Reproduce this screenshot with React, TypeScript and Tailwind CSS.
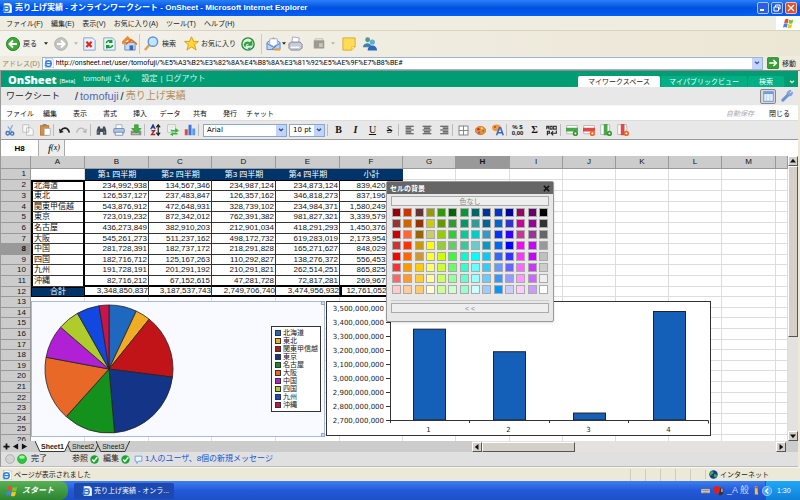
import { useState } from 'react';
import type { ReactNode } from 'react';
import clsx from 'clsx';

const browserMenu = ['ファイル(F)', '編集(E)', '表示(V)', 'お気に入り(A)', 'ツール(T)', 'ヘルプ(H)'];
const sheetMenu = ['ファイル', '編集', '表示', '書式', '挿入', 'データ', '共有', '発行', 'チャット'];

const columns = [
  { id: 'A', width: 'w-[54px]' },
  { id: 'B', width: 'w-[64px]' },
  { id: 'C', width: 'w-[63px]' },
  { id: 'D', width: 'w-[64px]' },
  { id: 'E', width: 'w-[64px]' },
  { id: 'F', width: 'w-[63px]' },
  { id: 'G', width: 'w-[53px]' },
  { id: 'H', width: 'w-[54px]' },
  { id: 'I', width: 'w-[53px]' },
  { id: 'J', width: 'w-[53px]' },
  { id: 'K', width: 'w-[53px]' },
  { id: 'L', width: 'w-[53px]' },
  { id: 'M', width: 'w-[54px]' },
  { id: '', width: '' },
];

const quarters = ['第1 四半期', '第2 四半期', '第3 四半期', '第4 四半期', '小計'];

const regions = [
  { name: '北海道', color: '#1f68c0', sales: ['234,992,938', '134,567,346', '234,987,124', '234,873,124', '839,420,532'] },
  { name: '東北', color: '#f0ac24', sales: ['126,537,127', '237,483,847', '126,357,162', '346,818,273', '837,196,409'] },
  { name: '関東甲信越', color: '#c01418', sales: ['543,876,912', '472,648,931', '328,739,102', '234,984,371', '1,580,249,316'] },
  { name: '東京', color: '#143488', sales: ['723,019,232', '872,342,012', '762,391,382', '981,827,321', '3,339,579,947'] },
  { name: '名古屋', color: '#14901c', sales: ['436,273,849', '382,910,203', '212,901,034', '418,291,293', '1,450,376,379'] },
  { name: '大阪', color: '#e86828', sales: ['545,261,273', '511,237,162', '498,172,732', '619,283,019', '2,173,954,186'] },
  { name: '中国', color: '#b020d4', sales: ['281,728,391', '182,737,172', '218,291,828', '165,271,627', '848,029,018'] },
  { name: '四国', color: '#b0cc2c', sales: ['182,716,712', '125,167,263', '110,292,827', '138,276,372', '556,453,174'] },
  { name: '九州', color: '#1048e0', sales: ['191,728,191', '201,291,192', '210,291,821', '262,514,251', '865,825,455'] },
  { name: '沖縄', color: '#c81448', sales: ['82,716,212', '67,152,615', '47,281,728', '72,817,281', '269,967,836'] },
];

const totals = ['3,348,850,837', '3,187,537,743', '2,749,706,740', '3,474,956,932', '12,761,052,252'];

const swatches = [
  '990000 cc3300 663333 999900 339900 006600 009933 006666 003399 0033cc 000099 990066 660066 000000',
  '993333 cc6600 993300 cccc00 669900 339933 009966 339999 006699 0066cc 3333cc cc0099 990099 333333',
  'cc0000 ff6633 996600 cccc66 99cc00 33cc33 00cc99 00cccc 3399cc 0033ff 3300ff cc3399 993399 666666',
  'cc3333 ff3300 cc9900 ffff00 99cc33 66cc66 33cc99 66cccc 0099cc 0066ff 0000ff ff00ff cc00ff 999999',
  'ff0000 ff6600 cc9933 ffff33 ccff00 33ff33 00ffcc 00ffff 00ccff 3366ff 3333ff ff33ff cc00ff c0c0c0',
  'ff3333 ff9900 ffcc00 ffff66 ccff33 66ff66 33ffcc 66ffff 33ccff 6699ff 6666ff ff66ff cc33ff cccccc',
  'ff6666 ff9933 ffcc33 ffff99 ccff66 99ff99 66ffcc 99ffff 66ccff 3399ff 9999ff ff99ff cc66ff eeeeee',
  'ffcccc ffcc99 ffcc66 ffffcc ccff99 ccffcc 99ffcc ccffff 99ccff 0099ff ccccff ffccff cc99ff ffffff',
].flatMap((line) => line.split(' '));

const toNumber = (value: string) => Number(value.replace(/,/g, ''));

function Icon({ size = 'size-[14px]', children }: { size?: string; children: ReactNode }) {
  return (
    <svg viewBox="0 0 16 16" className={clsx(size, 'shrink-0')} fill="none" aria-hidden="true">
      {children}
    </svg>
  );
}

function IePage({ size = 'size-[11px]' }: { size?: string }) {
  return (
    <Icon size={size}>
      <path d="M3 0h9l4 4v12H3z" fill="#fff" stroke="#7a96c8" />
      <circle cx="7" cy="9" r="4.6" stroke="#2a78d8" strokeWidth="2.2" />
      <path d="M3 9h8" stroke="#2a78d8" strokeWidth="2" />
      <path d="M1 13C4 5 10 3 13 5" stroke="#6aa8f0" strokeWidth="1.2" />
    </Icon>
  );
}

function WindowsFlag({ size = 'size-[12px]' }: { size?: string }) {
  return (
    <Icon size={size}>
      <path d="M3 2c2-1.300 4-1 5 0L7 7.500C5.500 6.500 3.500 6.500 1.500 7.500z" fill="#e8502c" />
      <path d="M9 2.500c2 1 4 1 6-.2L13.700 7.700c-2 1.200-4 1-5.700.1z" fill="#7cc42c" />
      <path d="M1.300 8.500c2-1 4-1 5.500 0L5.500 14C4 13 2 13 0 14z" fill="#3c84f0" />
      <path d="M7.800 8.800c2 1 4 1 5.700 0L12 14.300c-2 1-4 1-5.500 0z" fill="#f8c420" />
    </Icon>
  );
}

function Caret({ dim = false }: { dim?: boolean }) {
  return (
    <svg viewBox="0 0 6 4" className="h-[3px] w-[4px] shrink-0" aria-hidden="true">
      <path d="M0 0h6L3 4z" fill={dim ? '#b8b4a8' : '#222'} />
    </svg>
  );
}

function TitleBar() {
  return (
    <header className="flex h-4 shrink-0 items-center gap-[3px] bg-linear-to-b from-[#2a80f8] via-[#0050e0] to-[#0060f8] pl-0.5 pr-[3px]">
      <IePage size="size-[10px]" />
      <h1 className="flex-1 text-[8px] leading-none font-bold text-white">
        売り上げ実績 - オンラインワークシート - OnSheet - Microsoft Internet Explorer
      </h1>
      <div className="flex gap-[2px]">
        <button aria-label="最小化" className="flex size-3 items-end justify-start rounded-[2px] border border-[#a8c4f8] bg-[#2a60e0] p-[2px]">
          <span className="h-[2px] w-1 bg-white" />
        </button>
        <button aria-label="元に戻す" className="flex size-3 items-center justify-center rounded-[2px] border border-[#a8c4f8] bg-[#2a60e0]">
          <Icon size="size-[8px]">
            <path d="M5 6V2h9v8h-3M2 6h9v8H2z" stroke="#fff" strokeWidth="2" />
          </Icon>
        </button>
        <button aria-label="閉じる" className="flex size-3 items-center justify-center rounded-[2px] border border-[#f0c0b0] bg-[#e0502c]">
          <Icon size="size-[8px]">
            <path d="M2 2l12 12M14 2L2 14" stroke="#fff" strokeWidth="2.600" />
          </Icon>
        </button>
      </div>
    </header>
  );
}

function BrowserMenu() {
  return (
    <nav className="flex h-[15px] shrink-0 items-center border-b border-[#d8d4c4] bg-[#efede2]">
      <div className="flex flex-1 gap-2 pl-1.5">
        {browserMenu.map((item) => (
          <button key={item} className="text-[7px] leading-none text-[#222]">{item}</button>
        ))}
      </div>
      <div className="flex h-full w-6 items-center justify-center bg-white">
        <WindowsFlag size="size-[11px]" />
      </div>
    </nav>
  );
}

function Divider() {
  return <span className="h-5 w-px shrink-0 bg-[#cfcbbb]" />;
}

function BrowserToolbar() {
  return (
    <div className="flex h-[25px] shrink-0 items-center bg-linear-to-r from-[#f3f2ec] to-[#ece6d4] pl-1.5 text-[7px] leading-none whitespace-nowrap text-[#222]">
      <button className="flex w-12 items-center gap-[3px]">
        <Icon>
          <circle cx="8" cy="8" r="7.500" fill="#3cac34" stroke="#1c7c20" />
          <path d="M12.500 8H5M8 4L4 8l4 4" stroke="#fff" strokeWidth="2.200" />
        </Icon>
        戻る
        <span className="pl-1"><Caret /></span>
      </button>
      <button aria-label="進む" className="flex w-[25px] items-center gap-1.5">
        <Icon>
          <circle cx="8" cy="8" r="7.200" fill="#c4c4c2" stroke="#a8a8a8" />
          <path d="M3.500 8H11M8 4l4 4-4 4" stroke="#fff" strokeWidth="2.200" />
        </Icon>
        <Caret dim />
      </button>
      <button aria-label="中止" className="flex w-5 justify-center">
        <Icon>
          <path d="M2 1h10l3 3v11H2z" fill="#e8f2ff" stroke="#7c98d0" />
          <path d="M5 5.500l6 6M11 5.500l-6 6" stroke="#e02818" strokeWidth="2.600" />
        </Icon>
      </button>
      <button aria-label="更新" className="flex w-5 justify-center">
        <Icon>
          <path d="M2 1h10l3 3v11H2z" fill="#e8f8f0" stroke="#7c98d0" />
          <path d="M5 7c0-3 4-4 6-1.500M11 3v3H8M12 9c0 3-4 4-6 1.500M5.500 13v-3h3" stroke="#18983c" strokeWidth="1.800" />
        </Icon>
      </button>
      <button aria-label="ホーム" className="flex w-5 justify-center">
        <Icon size="size-[15px]">
          <path d="M3 7h11v8H3z" fill="#c8dcf8" stroke="#6c8cc8" />
          <path d="M0 8l6-6 4 4" stroke="#f08828" strokeWidth="3" />
          <path d="M4 9l6-5 6 5" stroke="#e07020" strokeWidth="1.800" />
          <path d="M8 10h4v5H8z" fill="#3468c0" />
        </Icon>
      </button>
      <Divider />
      <button className="ml-1 flex w-10 items-center gap-[3px]">
        <Icon size="size-[15px]">
          <path d="M1 15l5-6" stroke="#e09c50" strokeWidth="2.600" />
          <circle cx="9.500" cy="6" r="5" fill="#c4e4fc" stroke="#5c94d8" strokeWidth="1.500" />
        </Icon>
        検索
      </button>
      <button className="flex w-[57px] items-center gap-[2px]">
        <Icon size="size-[15px]">
          <path d="M8 .8l2.200 5h5.300l-4.200 3.500 1.600 5.700L8 11.600 3.100 15l1.600-5.700L.5 5.800h5.300z" fill="#ffd838" stroke="#e09818" />
        </Icon>
        お気に入り
      </button>
      <button aria-label="履歴" className="flex w-5 items-center">
        <Icon>
          <circle cx="8" cy="8" r="7" fill="#dcf4dc" stroke="#288c38" strokeWidth="1.600" />
          <path d="M3 9c1-4 5-5 7-3l3-3v7H6l3-2C7 7 5.500 8 5 12z" fill="#30a044" />
          <path d="M8 13.500l3-1" stroke="#3c84d0" strokeWidth="1.500" />
        </Icon>
      </button>
      <Divider />
      <button aria-label="メール" className="flex w-[24px] items-center gap-px pl-1">
        <Icon size="size-[15px]">
          <path d="M1 7l7-5 7 5v7.500H1z" fill="#b8d4fc" stroke="#5c84cc" />
          <path d="M4 3h8v6l-4 2-4-2z" fill="#fff" stroke="#a0a0b0" strokeWidth=".8" />
          <path d="M1 8l7 4 7-4M6 14l5-3" stroke="#5c84cc" />
          <path d="M9 13h6v2.500H9z" fill="#f0a030" />
        </Icon>
        <Caret />
      </button>
      <button aria-label="印刷" className="flex w-[19px] justify-center">
        <Icon size="size-[15px]">
          <path d="M4 7l1-6 7 1-1 6" fill="#fff" stroke="#a8a8b8" />
          <path d="M1 8l3-1.500h9l2 2.500v4l-3 2H3l-2-2z" fill="#c8ccd8" stroke="#80849c" />
          <path d="M3 12h9" stroke="#fff" strokeWidth="1.400" />
        </Icon>
      </button>
      <button aria-label="編集" className="flex w-[34px] items-center gap-1.5 pl-2">
        <Icon size="size-[12px]">
          <path d="M1 3h14v11H1z" fill="#9c9a92" />
          <path d="M8 7h5v5H8z" fill="#c8c6bc" />
          <path d="M3 3V1h10v2" stroke="#b4b2a8" />
        </Icon>
        <Caret dim />
      </button>
      <button aria-label="メモ" className="flex w-[20px] justify-center">
        <Icon>
          <path d="M1 1h14v10l-4 4H1z" fill="#ffdc58" stroke="#d8a820" />
          <path d="M15 11h-4v4z" fill="#fff0b0" stroke="#d8a820" strokeWidth=".6" />
        </Icon>
      </button>
      <button aria-label="メッセンジャー" className="flex w-5 justify-center">
        <Icon size="size-[15px]">
          <circle cx="6" cy="4" r="2.600" fill="#4c9c8c" />
          <path d="M1 12c0-5 9-6 9 0z" fill="#3c84b0" />
          <circle cx="11" cy="6.500" r="2.800" fill="#60acd4" />
          <path d="M6 15.500c0-7 10-7 10 0z" fill="#2c68b8" />
        </Icon>
      </button>
    </div>
  );
}

function Chevron({ color }: { color: string }) {
  return (
    <svg viewBox="0 0 8 6" className="h-[4px] w-[6px]" fill="none" aria-hidden="true">
      <path d="M1 1l3 3 3-3" stroke={color} strokeWidth="2" />
    </svg>
  );
}

function AddressBar() {
  return (
    <form className="flex h-[15px] shrink-0 items-center border-b border-[#948c8c] bg-[#efebde] pr-1" onSubmit={(e) => e.preventDefault()}>
      <label htmlFor="address" className="px-[2px] text-[7px] leading-none whitespace-nowrap text-[#8c8878]">アドレス(D)</label>
      <div className="flex h-[13px] flex-1 items-center gap-[2px] border border-[#9cb4d4] bg-white pl-px">
        <IePage size="size-[10px]" />
        <input
          id="address"
          className="min-w-0 flex-1 font-['Roboto',sans-serif] text-[7px] leading-[11px] text-black outline-none"
          defaultValue="http://onsheet.net/user/tomofuji/%E5%A3%B2%E3%82%8A%E4%B8%8A%E3%81%92%E5%AE%9F%E7%B8%BE#"
        />
        <button type="button" aria-label="アドレスの一覧" className="flex h-full w-[10px] items-center justify-center bg-[#c4d4fc]">
          <Chevron color="#405890" />
        </button>
      </div>
      <button className="flex items-center gap-[3px] pl-1 text-[7px] leading-none text-[#222]">
        <Icon size="size-[12px]">
          <rect x=".5" y=".5" width="15" height="15" rx="2" fill="#38a038" stroke="#207820" />
          <path d="M3 8h9M8.500 4l4 4-4 4" stroke="#fff" strokeWidth="2" />
        </Icon>
        移動
      </button>
    </form>
  );
}

function AppHeader() {
  return (
    <div className="flex h-4 shrink-0 items-center bg-[#009c74] text-[8px] leading-none text-white">
      <strong className="pl-[7px] font-['Open_Sans','Noto_Sans',sans-serif] text-[11px] leading-none font-extrabold">OnSheet</strong>
      <span className="pt-[3px] pl-[3px] text-[6px]">[Beta]</span>
      <a href="#user" className="pl-2 text-[#d8f4ec]">tomofuji さん</a>
      <p className="flex gap-[3px] pl-3 text-[#d8f4ec]">
        <a href="#settings">設定</a>|<a href="#logout">ログアウト</a>
      </p>
      <div className="ml-auto flex items-end gap-px self-end text-[7px] leading-none whitespace-nowrap">
        <button className="h-[11px] w-[82px] rounded-t-[2px] bg-white text-[#222]">マイワークスペース</button>
        <button className="h-[11px] w-[86px] rounded-t-[2px] bg-[#00b084]">マイパブリックビュー</button>
        <button className="h-[11px] w-9 rounded-t-[2px] bg-[#00b084]">検索</button>
        <button aria-label="その他" className="flex h-[11px] w-[13px] items-center justify-center"><Chevron color="#e8f4b0" /></button>
      </div>
    </div>
  );
}

function Breadcrumb() {
  return (
    <div className="flex h-[19px] shrink-0 items-center border-b border-[#f8f8f8] bg-[#e8e8e8] text-[10px] leading-none text-[#222]">
      <span className="w-[74px] pl-[5px] text-[9px]">ワークシート</span>
      <p className="flex items-center gap-[2px] text-[11px]">
        /<a href="#tomofuji" className="text-[#5068b8]">tomofuji</a>/
        <span className="text-[10px] text-[#b09058]">売り上げ実績</span>
      </p>
      <button aria-label="カレンダー" className="ml-auto flex h-[15px] w-4 items-center justify-center rounded-[2px] border border-[#888] bg-[#d8d8d8]">
        <Icon size="size-[11px]">
          <rect x="1" y="1" width="14" height="14" fill="#e8f2ff" stroke="#6c9ce0" strokeWidth="1.500" />
          <path d="M1 3h14" stroke="#6c9ce0" strokeWidth="3" />
          <path d="M5 5v10M10 5v10" stroke="#a8c8f0" />
        </Icon>
      </button>
      <button aria-label="設定" className="flex w-[22px] justify-center">
        <Icon size="size-[12px]">
          <path d="M2.500 13.500l7-7" stroke="#6c94d0" strokeWidth="4" strokeLinecap="round" />
          <path d="M8 5c0-3 3-5 5.500-4L11 3.500l1.500 1.500L15 2.500c1 3-1 5.500-4 5.500z" fill="#88a8dc" stroke="#6c94d0" />
        </Icon>
      </button>
    </div>
  );
}

function SheetMenu() {
  return (
    <nav className="flex h-[15px] shrink-0 items-center border-b border-[#ddd] bg-white pr-2 text-[7px] leading-none whitespace-nowrap text-[#111]">
      <div className="flex flex-1 pl-1">
        {sheetMenu.map((item) => (
          <button key={item} className="w-[30px]">{item}</button>
        ))}
      </div>
      <span className="w-[43px] text-[#aaa] italic">自動保存</span>
      <button>閉じる</button>
    </nav>
  );
}

function Tool({ label, children }: { label: string; children: ReactNode }) {
  return (
    <button aria-label={label} title={label} className="flex w-[17px] shrink-0 items-center justify-center">
      {children}
    </button>
  );
}

function ToolDivider() {
  return <span className="mr-[2px] h-3 w-px shrink-0 bg-[#bbb]" />;
}

function Picker({ label, value, width }: { label: string; value: string; width: string }) {
  return (
    <span className={clsx('relative flex h-[13px] shrink-0 items-center border border-[#88a8cc] bg-white', width)}>
      <select aria-label={label} className="h-full w-full appearance-none pl-[3px] font-['DejaVu_Sans',sans-serif] text-[7px] leading-[11px] text-black outline-none">
        <option>{value}</option>
      </select>
      <span className="pointer-events-none absolute inset-y-0 right-0 flex w-[10px] items-center justify-center bg-[#c0d4fc]">
        <Chevron color="#304880" />
      </span>
    </span>
  );
}

function InsertIcon({ color, badge, vertical = false }: { color: string; badge: string; vertical?: boolean }) {
  return (
    <Icon size="size-[12px]">
      {vertical ? (
        <>
          <path d="M1 1h12v13H1z" fill="#fff" stroke="#aaa" />
          <path d="M5 0h5v15H5z" fill={color} />
        </>
      ) : (
        <>
          <path d="M1 2h14v11H1z" fill="#fff" stroke="#aaa" />
          <path d="M0 5h16v5H0z" fill={color} />
        </>
      )}
      <circle cx="12.500" cy="12.500" r="3.500" fill={badge} />
      <path d="M11 12.500h3M12.500 11v3" stroke="#fff" />
    </Icon>
  );
}

function PaletteIcon() {
  return (
    <Icon size="size-[11px]">
      <ellipse cx="8" cy="8" rx="7.500" ry="6" fill="#f08c38" stroke="#c86420" />
      <circle cx="5" cy="6" r="1.800" fill="#d82818" />
      <circle cx="10" cy="5" r="1.600" fill="#f8e040" />
      <circle cx="12" cy="8.500" r="1.600" fill="#40a040" />
      <circle cx="6" cy="11" r="1.600" fill="#4070d0" />
    </Icon>
  );
}

function SheetToolbar() {
  return (
    <div className="flex h-[19px] shrink-0 items-center border-b border-[#999] bg-[#e8e8e8] pl-px font-['Liberation_Serif',serif] text-[10px] leading-none text-[#111]">
      <Tool label="切り取り">
        <Icon size="size-[11px]">
          <path d="M11 0L6 10M4 2l6 8" stroke="#88acd8" strokeWidth="1.800" />
          <circle cx="4" cy="12" r="2.500" stroke="#3c74c0" strokeWidth="2" />
          <circle cx="10.500" cy="12.500" r="2.300" stroke="#3c74c0" strokeWidth="2" />
        </Icon>
      </Tool>
      <Tool label="コピー">
        <Icon size="size-[12px]">
          <path d="M1 1h8v10H1zM6 5h6l3 3v7H6z" fill="#f8f8f8" stroke="#b4b4b4" />
        </Icon>
      </Tool>
      <Tool label="貼り付け">
        <Icon size="size-[12px]">
          <path d="M2 2h11v13H2z" fill="#d88c3c" stroke="#b06c20" />
          <path d="M5 0h5v3H5z" fill="#888" />
          <path d="M7 6h8v9H7z" fill="#fff" stroke="#aaa" />
        </Icon>
      </Tool>
      <ToolDivider />
      <Tool label="元に戻す">
        <Icon size="size-[11px]">
          <path d="M3 8c3-5 10-5 12 3" stroke="#222" strokeWidth="2.400" />
          <path d="M0 5l1 7 6-2z" fill="#222" />
        </Icon>
      </Tool>
      <Tool label="やり直し">
        <Icon size="size-[11px]">
          <path d="M13 8C10 3 3 3 1 11" stroke="#b8b8b8" strokeWidth="2" />
          <path d="M16 5l-1 7-6-2z" fill="#b8b8b8" />
        </Icon>
      </Tool>
      <ToolDivider />
      <Tool label="検索">
        <Icon size="size-[11px]">
          <path d="M3 2h3v3h4V2h3l2 6v6h-5v-4H6v4H1V8z" fill="#444c58" />
          <path d="M3 9v3M12 9v3" stroke="#a0b0c0" />
        </Icon>
      </Tool>
      <Tool label="印刷">
        <Icon size="size-[12px]">
          <path d="M4 1h8v6H4z" fill="#fff" stroke="#88a0c0" />
          <rect x="1" y="6" width="14" height="6" rx="1" fill="#b0c4e0" stroke="#5c78a8" />
          <path d="M3 11h10v4H3z" fill="#fff" stroke="#5c78a8" />
        </Icon>
      </Tool>
      <Tool label="ダウンロード">
        <Icon size="size-[12px]">
          <path d="M1 9h14v6H1z" fill="#888c88" />
          <path d="M6 1h5v5h4l-6.500 6L2 6h4z" fill="#38b438" stroke="#208020" strokeWidth=".7" />
          <path d="M3 13h9" stroke="#ddd" />
        </Icon>
      </Tool>
      <ToolDivider />
      <Tool label="並べ替え">
        <Icon size="size-[12px]">
          <path d="M1 7l3-6 3 6M2 5h4" stroke="#203890" strokeWidth="1.600" />
          <path d="M2 9h4l-4 5h5" stroke="#a02828" strokeWidth="1.700" />
          <path d="M11 14V2M8.500 4.500L11 1l2.500 3.500M8.500 11.500L11 15l2.500-3.500" stroke="#222" strokeWidth="1.600" />
        </Icon>
      </Tool>
      <Tool label="共有">
        <Icon size="size-[12px]">
          <path d="M1 1h10v10H1z" fill="#fff" stroke="#a0b8a0" />
          <path d="M3 4h6M3 7h6" stroke="#bbb" />
          <path d="M5 8h6V5l5 4-5 3v-2H5zM14 12H8v-1l-4 3 4 2v-2h6z" fill="#3cb040" />
        </Icon>
      </Tool>
      <Tool label="グラフ">
        <Icon size="size-[12px]">
          <path d="M1 7h4v8H1z" fill="#e04848" />
          <path d="M6 1h4v14H6z" fill="#3c74d8" />
          <path d="M11 6h4v9h-4z" fill="#5c9ce8" />
        </Icon>
      </Tool>
      <ToolDivider />
      <div className="flex gap-[2px] px-[2px]">
        <Picker label="フォント" value="Arial" width="w-[84px]" />
        <Picker label="サイズ" value="10 pt" width="w-9" />
      </div>
      <ToolDivider />
      <Tool label="太字"><b>B</b></Tool>
      <Tool label="斜体"><i className="font-bold">I</i></Tool>
      <Tool label="下線"><u>U</u></Tool>
      <Tool label="取り消し線"><s>S</s></Tool>
      <ToolDivider />
      <Tool label="左揃え">
        <Icon size="size-[10px]"><path d="M1 2h13M1 5h9M1 8h13M1 11h9M1 14h13" stroke="#444" strokeWidth="1.800" /></Icon>
      </Tool>
      <Tool label="中央揃え">
        <Icon size="size-[10px]"><path d="M1 2h14M3 5h10M1 8h14M3 11h10M1 14h14" stroke="#444" strokeWidth="1.800" /></Icon>
      </Tool>
      <Tool label="右揃え">
        <Icon size="size-[10px]"><path d="M2 2h13M6 5h9M2 8h13M6 11h9M2 14h13" stroke="#444" strokeWidth="1.800" /></Icon>
      </Tool>
      <ToolDivider />
      <Tool label="罫線">
        <Icon size="size-[11px]">
          <rect x="1.500" y="1.500" width="13" height="13" fill="#fff" stroke="#888" strokeWidth="1.500" />
          <path d="M8 1v14M1 8h14" stroke="#888" strokeWidth="1.500" />
        </Icon>
      </Tool>
      <Tool label="背景色"><PaletteIcon /></Tool>
      <Tool label="文字色">
        <Icon size="size-[12px]">
          <ellipse cx="6" cy="5" rx="6" ry="4.500" fill="#f0983c" />
          <circle cx="4" cy="4" r="1.200" fill="#d83020" />
          <path d="M6 15l4-10h1.500L15 15M8 11.500h6" stroke="#3468c8" strokeWidth="2" />
        </Icon>
      </Tool>
      <ToolDivider />
      <Tool label="表示形式">
        <span className="flex flex-col font-['Liberation_Sans',sans-serif] text-[6px] leading-[6px] font-bold">
          <span>% $</span>
          <span>0,00</span>
        </span>
      </Tool>
      <Tool label="合計"><b>Σ</b></Tool>
      <Tool label="折り返し">
        <Icon size="size-[11px]">
          <path d="M1 6V2h3v4M1 4h3M6 2v4h3V2zM11 2h4v4h-4z" stroke="#333" strokeWidth="1.500" />
          <path d="M2 15V9h3v3H2M15 8v4H8M10.500 9L7.500 12l3 3" stroke="#222" strokeWidth="1.600" />
        </Icon>
      </Tool>
      <ToolDivider />
      <Tool label="行の挿入"><InsertIcon color="#48a848" badge="#389838" /></Tool>
      <Tool label="行の削除"><InsertIcon color="#e04848" badge="#f06820" /></Tool>
      <Tool label="列の挿入"><InsertIcon vertical color="#48a848" badge="#389838" /></Tool>
      <Tool label="列の削除"><InsertIcon vertical color="#e04848" badge="#f06820" /></Tool>
    </div>
  );
}

function FormulaBar() {
  return (
    <div className="flex h-4 shrink-0 items-center bg-white">
      <input aria-label="セル" defaultValue="H8" className="h-full w-[38px] border-r border-[#aaa] text-center text-[8px] leading-4 font-bold outline-none" />
      <label htmlFor="formula" className="flex h-full w-[26px] items-center justify-end border-r border-[#aaa] bg-[#eee] pr-1 font-['Liberation_Serif',serif] text-[11px] leading-none italic">
        f<span className="text-[8px]">(x)</span>
      </label>
      <input id="formula" className="h-full min-w-0 flex-1 outline-none" />
    </div>
  );
}

const dataLine = 'border-[#333]';

function SheetGrid() {
  const cell = (row: number, col: number) => {
    const id = `${row}-${col}`;
    if (row === 1 && col >= 1 && col <= 5) {
      return <td key={id} className="bg-[#003468] text-center text-white">{quarters[col - 1]}</td>;
    }
    if (row >= 2 && row <= 11 && col === 0) {
      return (
        <td key={id} className={clsx('border-x-2 border-b border-x-black pl-px', dataLine, row === 2 && 'border-t-2 border-t-black')}>
          {regions[row - 2].name}
        </td>
      );
    }
    if (row >= 2 && row <= 11 && col <= 5) {
      return (
        <td key={id} className={clsx('border-r border-b pr-px text-right', dataLine, row === 11 && 'border-b-2 border-b-black', row === 2 && 'border-t border-t-black')}>
          {regions[row - 2].sales[col - 1]}
        </td>
      );
    }
    if (row === 12 && col === 0) {
      return <td key={id} className="border border-black bg-[#003468] text-center text-white">合計</td>;
    }
    if (row === 12 && col <= 5) {
      return (
        <td key={id} className={clsx('border-r border-b-2 border-r-[#333] border-b-black text-right', col === 5 && 'border-l-2 border-l-black')}>
          {totals[col - 1]}
        </td>
      );
    }
    return <td key={id} className="border-r border-b border-[#ddd]" />;
  };

  return (
    <table className="w-full table-fixed border-separate border-spacing-0 text-[8px] leading-[8px] whitespace-nowrap text-[#111]">
      <colgroup>
        <col className="w-[30px]" />
        {columns.map((column) => <col key={column.id} className={column.width} />)}
      </colgroup>
      <thead>
        <tr className="h-[13px] bg-[#ccc]">
          <th className="border-r border-b border-[#999]" />
          {columns.map(({ id }) => (
            <th key={id} className={clsx('border-r border-b border-[#999]', id === 'H' ? 'bg-[#999]' : 'font-normal')}>{id}</th>
          ))}
        </tr>
      </thead>
      <tbody className="[&>tr]:h-[11px] [&>tr:nth-child(5n+2)]:h-[10px] [&>tr:nth-child(5n+4)]:h-[10px]">
        {Array.from({ length: 26 }, (_, i) => i + 1).map((row) => (
          <tr key={row}>
            <th className={clsx('border-r border-b border-[#999] pr-1 text-right', row === 8 ? 'bg-[#999]' : 'bg-[#ccc] font-normal')}>{row}</th>
            {columns.map((_, col) => cell(row, col))}
          </tr>
        ))}
      </tbody>
    </table>
  );
}

function PieChart() {
  const values = regions.map((region) => toNumber(region.sales[0]));
  const sum = values.reduce((a, b) => a + b, 0);
  const radius = 64;
  const point = (share: number) => {
    const angle = share * Math.PI * 2;
    return `${77 + radius * Math.sin(angle)} ${67 - radius * Math.cos(angle)}`;
  };

  let start = 0;
  const slices = regions.map((region, i) => {
    const end = start + values[i] / sum;
    const d = `M77 67L${point(start)}A${radius} ${radius} 0 0 1 ${point(end)}z`;
    start = end;
    return <path key={region.name} d={d} fill={region.color} stroke="#222" strokeWidth=".8" />;
  });

  return (
    <figure className="absolute top-[145px] left-[30px] flex h-[136px] w-[294px] items-center justify-between border border-[#a8b8d8] bg-[#f9faff] pr-[3px]">
      <svg viewBox="0 0 160 134" className="h-[134px] w-[160px]" role="img" aria-label="第1 四半期">
        {slices}
      </svg>
      <ul className="w-[50px] border border-[#333] bg-white px-[3px] py-[2px] text-[7px] leading-[8px] whitespace-nowrap text-[#222]">
        {regions.map((region) => (
          <li key={region.name} className="flex items-center gap-[2px]">
            <span className="size-[6px] shrink-0 border border-[#333]" style={{ backgroundColor: region.color }} />
            {region.name}
          </li>
        ))}
      </ul>
      <span className="absolute -top-px -right-px size-1 border border-[#90a8d8] bg-[#d0dcf4]" />
      <span className="absolute -right-px -bottom-px size-1 border border-[#90a8d8] bg-[#d0dcf4]" />
    </figure>
  );
}

function BarChart() {
  const min = 2700000000;
  const max = 3500000000;
  const top = 6;
  const base = 118;
  const y = (value: number) => base - ((value - min) / (max - min)) * (base - top);
  const ticks = Array.from({ length: 9 }, (_, i) => min + i * 100000000);
  const step = 80;

  return (
    <figure className="absolute top-[145px] left-[325px] h-[135px] w-[385px] border border-[#333] bg-white">
      <svg viewBox="0 0 383 133" className="h-[133px] w-[383px] font-['DejaVu_Sans',sans-serif] text-[7px]" role="img" aria-label="合計">
        {totals.slice(0, 4).map((total, i) => {
          const height = base - y(toNumber(total));
          return (
            <g key={total}>
              <rect x={62.500 + i * step + 24} y={base - height} width="32" height={height} fill="#1460b8" stroke="#222" />
              <text x={62.500 + i * step + 39} y="130" textAnchor="middle" fill="#222">{i + 1}</text>
            </g>
          );
        })}
        {ticks.map((tick) => (
          <g key={tick}>
            <path d={`M59 ${y(tick) + 0.5}h4`} stroke="#333" />
            <text x="57" y={y(tick) + 3} textAnchor="end" fill="#222">{tick.toLocaleString('en-US')}</text>
          </g>
        ))}
        <path d={`M63.500 ${top}V${base + 3}M63.500 ${base + .5}H381.500v3`} stroke="#333" fill="none" />
        <path d="M142.500 118v3M222.500 118v3M301.500 118v3" stroke="#333" />
      </svg>
    </figure>
  );
}

function ColorDialog({ onClose }: { onClose: () => void }) {
  return (
    <section role="dialog" aria-labelledby="palette-title" className="absolute top-[25px] left-[385px] w-[168px] rounded-[2px] border border-[#999] bg-[#e8e8e8] shadow-sm">
      <header className="flex h-3 items-center justify-between bg-[#666] px-[3px] text-white">
        <h2 id="palette-title" className="text-[7px] leading-none font-bold">セルの背景</h2>
        <button aria-label="閉じる" onClick={onClose}>
          <Icon size="size-[7px]">
            <path d="M2 2l12 12M14 2L2 14" stroke="#111" strokeWidth="3.500" />
          </Icon>
        </button>
      </header>
      <div className="flex flex-col gap-[2px] px-1 pt-[2px] pb-2">
        <button className="h-[10px] border border-[#aaa] bg-[#eee] text-[7px] leading-none text-[#888]">色なし</button>
        <div className="grid grid-cols-[repeat(14,9px)] justify-between gap-y-[2px] border-b border-[#ccc] px-px pb-1.5">
          {swatches.map((color, i) => (
            <button key={i} aria-label={`#${color}`} className="size-[9px] border border-[#aaa]" style={{ backgroundColor: `#${color}` }} />
          ))}
        </div>
        <button className="h-[10px] border border-[#aaa] bg-[#eee] text-[7px] leading-none text-[#888]">&lt; &lt;</button>
      </div>
    </section>
  );
}

const bevel = 'border border-t-white border-l-white border-r-[#555] border-b-[#555] bg-[#d4d0c8]';

function ScrollButton({ label, path }: { label: string; path: string }) {
  return (
    <button aria-label={label} className={clsx('flex size-[10px] shrink-0 items-center justify-center', bevel)}>
      <svg viewBox="0 0 8 8" className="size-[6px]" aria-hidden="true"><path d={path} fill="#111" /></svg>
    </button>
  );
}

function TabEdge({ active }: { active: boolean }) {
  return (
    <svg viewBox="0 0 36 11" preserveAspectRatio="none" className="absolute inset-0 h-full w-full" aria-hidden="true">
      <path d="M0 0L5 10.500H30.500L35.500 0" fill={active ? '#fff' : '#ccc'} stroke="#333" />
    </svg>
  );
}

function SheetTabs() {
  const [active, setActive] = useState('Sheet1');
  return (
    <div className="flex h-[11px] shrink-0 bg-[#ccc] pr-3">
      <div className="flex flex-1 items-center text-[7px] leading-none text-[#222]">
        <div className="flex w-[34px] items-center gap-[2px] pl-[2px]">
          <button aria-label="シートの追加"><Icon size="size-[7px]"><path d="M8 1v14M1 8h14" stroke="#111" strokeWidth="4" /></Icon></button>
          <button aria-label="前のシート"><Icon size="size-[7px]"><path d="M14 1v14L2 8z" fill="#111" /></Icon></button>
          <button aria-label="次のシート"><Icon size="size-[7px]"><path d="M2 1v14l12-7z" fill="#111" /></Icon></button>
        </div>
        {['Sheet1', 'Sheet2', 'Sheet3'].map((name) => (
          <button
            key={name}
            onClick={() => setActive(name)}
            className={clsx('relative -mr-1 h-full px-[6px]', active === name && 'z-10 font-bold')}
          >
            <TabEdge active={active === name} />
            <span className="relative">{name}</span>
          </button>
        ))}
      </div>
      <div className="flex w-2/5 items-center bg-[#e4e2de]">
        <ScrollButton label="左へ" path="M6 0v8L1 4z" />
        <span className={clsx('h-[10px] w-[93px]', bevel)} />
        <span className="flex-1" />
        <ScrollButton label="右へ" path="M2 0v8l5-4z" />
      </div>
    </div>
  );
}

function CheckBadge() {
  return (
    <Icon size="size-[9px]">
      <circle cx="8" cy="8" r="7.500" fill="#18a830" />
      <path d="M4 8l3 3.500L13 4" stroke="#fff" strokeWidth="2.600" />
    </Icon>
  );
}

function AppStatus() {
  return (
    <div className="flex h-[15px] shrink-0 items-center border-b border-[#bbb] bg-[#e0e0e0] pl-1 text-[8px] leading-none text-[#222]">
      <div className="flex w-[67px] items-center gap-[2px]">
        <Icon size="size-[10px]"><circle cx="8" cy="8" r="7" fill="#d4d4d4" stroke="#999" /></Icon>
        <Icon size="size-[10px]">
          <circle cx="8" cy="8" r="7.200" fill="#28c838" stroke="#209830" />
          <ellipse cx="8" cy="5" rx="4.500" ry="2.500" fill="#b0f0b0" />
        </Icon>
        <span className="pl-[2px]">完了</span>
      </div>
      <div className="flex items-center gap-[2px]">
        参照<CheckBadge /><span className="pl-[2px]">編集</span><CheckBadge />
      </div>
      <a href="#chat" className="flex items-center gap-[2px] pl-1 text-[#1450d8]">
        <Icon size="size-[9px]">
          <path d="M2 2h12v9H8l-3 4v-4H2z" fill="#f0f8ff" stroke="#5c98e0" strokeWidth="1.500" />
        </Icon>
        1人のユーザ、8個の新規メッセージ
      </a>
    </div>
  );
}

function BrowserStatus() {
  return (
    <div className="flex h-[14px] shrink-0 items-center border-t border-[#f8f8f0] bg-[#ece9d8] pl-[2px] text-[7px] leading-none text-[#222]">
      <p className="flex flex-1 items-center gap-[2px]"><IePage size="size-[10px]" />ページが表示されました</p>
      {[1, 2, 3, 4, 5].map((n) => <span key={n} className="h-3 w-[15px] border-l border-[#d0ccbc]" />)}
      <p className="flex w-[95px] items-center gap-[2px] border-l border-[#d0ccbc] pl-[3px]">
        <Icon size="size-[9px]">
          <circle cx="8" cy="8" r="7.500" fill="#1838a0" />
          <path d="M3 3c3-2 5 0 5 2S4 8 3 10 1 6 3 3zM9 8c3-1 5 0 5 2s-3 4-4 3-2-4-1-5z" fill="#38b838" />
        </Icon>
        インターネット
      </p>
    </div>
  );
}

function Taskbar() {
  return (
    <footer className="flex h-[19px] shrink-0 items-center bg-linear-to-b from-[#3c80f0] via-[#2458d8] to-[#1c50c8] text-[7px] leading-none text-white">
      <button className="flex h-full w-[68px] items-center gap-1 rounded-r-lg bg-linear-to-b from-[#58b058] to-[#2c8430] pl-1.5 text-[8px] font-bold italic">
        <WindowsFlag />
        スタート
      </button>
      <button className="ml-1.5 flex h-4 w-[100px] items-center gap-[2px] rounded-[2px] bg-[#1c48b0] pl-2">
        <IePage size="size-[10px]" />
        売り上げ実績 - オンラ...
      </button>
      <div className="ml-auto flex items-center gap-[3px] pr-1">
        <Icon size="size-[9px]"><path d="M0 5h16v8H0z" fill="#e0dcd0" stroke="#444" /><path d="M2 8h12M3 11h10" stroke="#555" /></Icon>
        <Icon size="size-[11px]">
          <circle cx="6" cy="7" r="5.500" fill="#e02018" />
          <path d="M11 4h4v8l-3 3H8z" fill="#333" />
          <path d="M13 5v5" stroke="#eee" strokeWidth="1.500" />
        </Icon>
        <button className="text-[9px] leading-none text-[#c8dcff]">_A 般</button>
        <Icon size="size-[9px]"><path d="M5 1h5v7l1 7H5z" fill="#f0c040" /><path d="M6 3h4" stroke="#c03020" strokeWidth="2" /></Icon>
      </div>
      <div className="flex h-full w-[35px] items-center gap-[5px] border-l border-[#0c60c0] bg-linear-to-b from-[#20a8f8] to-[#1080d8]">
        <button aria-label="インジケーターを表示" className="-ml-1">
          <Icon size="size-[10px]">
            <circle cx="8" cy="8" r="7.500" fill="#48a8f4" stroke="#c0e0fc" />
            <path d="M10 4L6 8l4 4" stroke="#fff" strokeWidth="2" />
          </Icon>
        </button>
        <time>1:30</time>
      </div>
    </footer>
  );
}

export default function App() {
  const [paletteOpen, setPaletteOpen] = useState(true);

  return (
    <div className="flex h-screen flex-col overflow-hidden bg-[#ece9d8] font-['Liberation_Sans','Noto_Sans_CJK_JP',sans-serif]">
      <TitleBar />
      <BrowserMenu />
      <BrowserToolbar />
      <AddressBar />
      <main className="mr-[2px] flex min-h-0 flex-1 flex-col border-l border-[#999]">
        <AppHeader />
        <Breadcrumb />
        <SheetMenu />
        <SheetToolbar />
        <FormulaBar />
        <div className="flex min-h-0 flex-1 bg-white">
          <div className="relative min-w-0 flex-1 overflow-hidden">
            <SheetGrid />
            <PieChart />
            <BarChart />
            {paletteOpen && <ColorDialog onClose={() => setPaletteOpen(false)} />}
          </div>
          <div className="flex w-[10px] shrink-0 flex-col bg-[#e4e2de]">
            <ScrollButton label="上へ" path="M0 6h8L4 1z" />
            <span className={clsx('h-3/5 w-full', bevel)} />
            <span className="flex-1" />
            <ScrollButton label="下へ" path="M0 2h8L4 7z" />
          </div>
        </div>
        <SheetTabs />
        <AppStatus />
      </main>
      <BrowserStatus />
      <Taskbar />
    </div>
  );
}
